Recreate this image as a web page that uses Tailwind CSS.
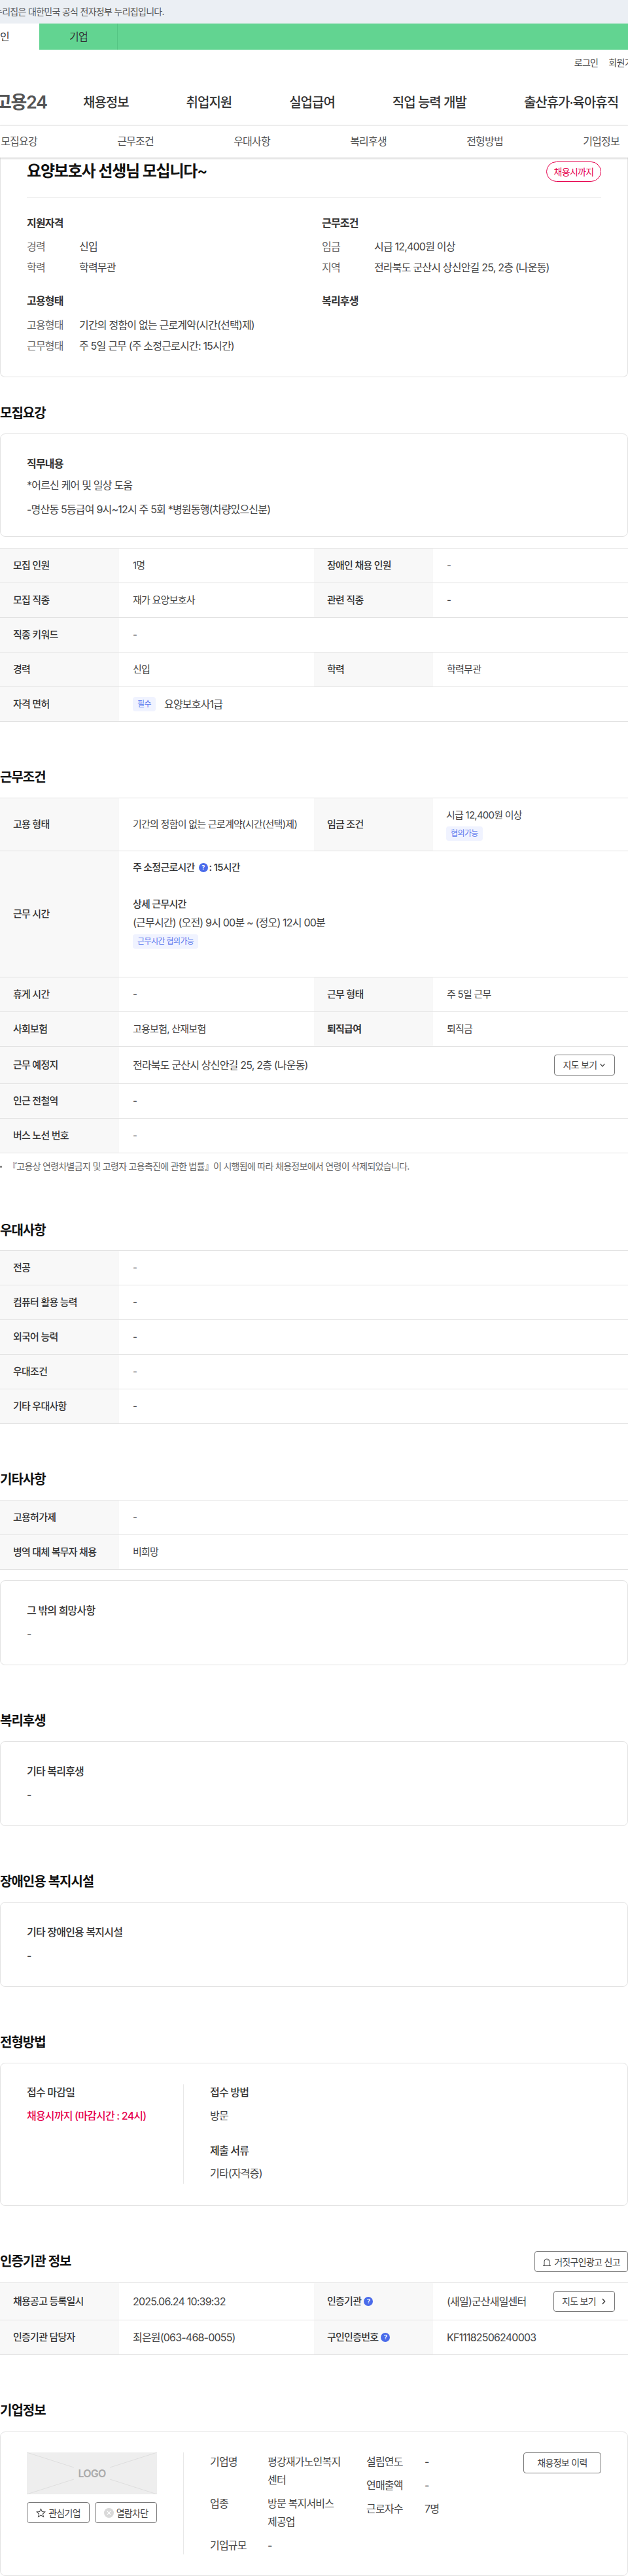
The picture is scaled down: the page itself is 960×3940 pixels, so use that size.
<!DOCTYPE html>
<html lang="ko">
<head>
    <meta charset="UTF-8" />
    <title>고용24 채용정보</title>
    <script src="https://cdn.jsdelivr.net/npm/@tailwindcss/browser@4"></script>
</head>
<body class="bg-white text-[#444] font-['Inter','Noto_Sans_CJK_KR',sans-serif] text-[15px]">
<div class="w-[960px] h-[3940px] overflow-hidden tracking-[-0.05em] [&_*]:tracking-[-0.05em]">

    <!-- gov banner -->
    <div class="h-9 bg-[#ebeff4] text-[14px] leading-9 text-[#555] whitespace-nowrap"><span class="-ml-[9px] inline-block">누리집은 대한민국 공식 전자정부 누리집입니다.</span></div>
    <div class="flex h-10 bg-[#62d491] text-[16px] leading-10 text-[#333]">
        <div class="w-[60px] bg-white overflow-hidden whitespace-nowrap"><span class="-ml-[14px] inline-block">개인</span></div>
        <div class="w-[120px] border-r border-[#55c484] pl-[46px]">기업</div>
    </div>

    <!-- header -->
    <header class="h-[116px] border-b border-[#e8e8e8]">
        <div class="flex justify-end gap-4 pt-[8px] -mr-[19px] text-[14px] leading-6 whitespace-nowrap text-[#444]">
            <span>로그인</span><span>회원가입</span>
        </div>
        <nav class="flex items-center mt-[33px] whitespace-nowrap text-[20px] leading-8 font-medium text-[#333]">
            <span class="-ml-[7px] w-[134px] text-[27px] font-semibold text-[#555]">고용24</span>
            <div class="flex gap-[88px]">
                <span>채용정보</span><span>취업지원</span><span>실업급여</span><span>직업 능력 개발</span><span>출산휴가·육아휴직</span>
            </div>
        </nav>
    </header>

    <!-- tabs -->
    <div class="relative z-10 h-[49px] bg-white shadow-[0_1px_3px_rgba(0,0,0,0.25)] overflow-hidden">
        <div class="grid grid-cols-6 w-[1068px] -ml-[60px] text-center text-[16px] leading-[49px] text-[#555]">
            <span>모집요강</span><span>근무조건</span><span>우대사항</span><span>복리후생</span><span>전형방법</span><span>기업정보</span>
        </div>
    </div>

    <main>
        <!-- summary card -->
        <section class="h-[336px] border-x border-b border-[#e2e2e2] rounded-b-lg px-10 text-[16px]">
            <div class="flex justify-between items-start h-[62px] border-b border-[#e8e8e8] pt-[5px]">
                <h1 class="text-[24px] leading-8 font-semibold text-[#111]">요양보호사 선생님 모십니다~</h1>
                <span class="mt-px h-[31px] w-[84px] rounded-full border border-[#e6004c] text-center text-[14px] leading-[29px] text-[#e6004c]">채용시까지</span>
            </div>
            <div class="grid grid-cols-[451px_1fr] pt-[26px]">
                <div class="h-[119px]">
                    <h3 class="leading-6 font-semibold text-[#333] mb-2">지원자격</h3>
                    <div class="flex leading-8"><span class="w-20 text-[#666]">경력</span><span>신입</span></div>
                    <div class="flex leading-8"><span class="w-20 text-[#666]">학력</span><span>학력무관</span></div>
                </div>
                <div class="h-[119px]">
                    <h3 class="leading-6 font-semibold text-[#333] mb-2">근무조건</h3>
                    <div class="flex leading-8"><span class="w-20 text-[#666]">임금</span><span>시급 12,400원 이상</span></div>
                    <div class="flex leading-8"><span class="w-20 text-[#666]">지역</span><span>전라북도 군산시 상신안길 25, 2층 (나운동)</span></div>
                </div>
                <div>
                    <h3 class="leading-6 font-semibold text-[#333] mb-[9px]">고용형태</h3>
                    <div class="flex leading-8"><span class="w-20 text-[#666]">고용형태</span><span>기간의 정함이 없는 근로계약(시간(선택)제)</span></div>
                    <div class="flex leading-8"><span class="w-20 text-[#666]">근무형태</span><span>주 5일 근무 (주 소정근로시간: 15시간)</span></div>
                </div>
                <div>
                    <h3 class="leading-6 font-semibold text-[#333]">복리후생</h3>
                </div>
            </div>
        </section>

        <!-- 모집요강 -->
        <h2 class="mt-10 mb-4 text-[20px] leading-[30px] font-semibold text-[#111]">모집요강</h2>
        <div class="h-[158px] border border-[#e2e2e2] rounded-lg px-10 pt-[33px] text-[16px]">
            <h3 class="leading-6 font-semibold text-[#333] mb-[5px]">직무내용</h3>
            <p class="leading-8 mb-[5px]">*어르신 케어 및 일상 도움</p>
            <p class="leading-8">-명산동 5등급여 9시~12시 주 5회 *병원동행(차량있으신분)</p>
        </div>

        <div class="mt-[17px] border-t border-[#e2e2e2]">
            <div class="grid grid-cols-[182px_298px_182px_1fr] h-[53px] border-b border-[#e2e2e2] items-stretch leading-[52px]">
                <div class="bg-[#f8f8f8] pl-5 font-medium text-[#333]">모집 인원</div><div class="pl-[21px]">1명</div>
                <div class="bg-[#f8f8f8] pl-5 font-medium text-[#333]">장애인 채용 인원</div><div class="pl-[21px]">-</div>
            </div>
            <div class="grid grid-cols-[182px_298px_182px_1fr] h-[53px] border-b border-[#e2e2e2] leading-[52px]">
                <div class="bg-[#f8f8f8] pl-5 font-medium text-[#333]">모집 직종</div><div class="pl-[21px]">재가 요양보호사</div>
                <div class="bg-[#f8f8f8] pl-5 font-medium text-[#333]">관련 직종</div><div class="pl-[21px]">-</div>
            </div>
            <div class="grid grid-cols-[182px_1fr] h-[53px] border-b border-[#e2e2e2] leading-[52px]">
                <div class="bg-[#f8f8f8] pl-5 font-medium text-[#333]">직종 키워드</div><div class="pl-[21px]">-</div>
            </div>
            <div class="grid grid-cols-[182px_298px_182px_1fr] h-[53px] border-b border-[#e2e2e2] leading-[52px]">
                <div class="bg-[#f8f8f8] pl-5 font-medium text-[#333]">경력</div><div class="pl-[21px]">신입</div>
                <div class="bg-[#f8f8f8] pl-5 font-medium text-[#333]">학력</div><div class="pl-[21px]">학력무관</div>
            </div>
            <div class="grid grid-cols-[182px_1fr] h-[53px] border-b border-[#e2e2e2] leading-[52px]">
                <div class="bg-[#f8f8f8] pl-5 font-medium text-[#333]">자격 면허</div>
                <div class="pl-[21px] flex items-center gap-[13px]">
                    <span class="w-[35px] h-[22px] rounded bg-[#f0f3ff] text-center text-[12px] leading-[22px] text-[#5b78ee]">필수</span>
                    <span class="text-[16px]">요양보호사1급</span>
                </div>
            </div>
        </div>

        <!-- 근무조건 -->
        <h2 class="mt-[70px] mb-4 text-[20px] leading-[30px] font-semibold text-[#111]">근무조건</h2>
        <div class="border-t border-[#e2e2e2]">
            <div class="grid grid-cols-[182px_298px_182px_1fr] h-[81px] border-b border-[#e2e2e2] items-stretch">
                <div class="bg-[#f8f8f8] pl-5 font-medium text-[#333] flex items-center">고용 형태</div>
                <div class="pl-[21px] flex items-center">기간의 정함이 없는 근로계약(시간(선택)제)</div>
                <div class="bg-[#f8f8f8] pl-5 font-medium text-[#333] flex items-center">임금 조건</div>
                <div class="pl-[20px] pt-[14px]">
                    <p class="leading-6">시급 12,400원 이상</p>
                    <span class="block w-fit mt-[5px] px-[7px] h-[22px] rounded bg-[#f0f3ff] text-[12px] leading-[22px] text-[#5b78ee]">협의가능</span>
                </div>
            </div>
            <div class="grid grid-cols-[182px_1fr] h-[193px] border-b border-[#e2e2e2]">
                <div class="bg-[#f8f8f8] pl-5 font-medium text-[#333] flex items-center">근무 시간</div>
                <div class="pl-[21px] pt-[13px]">
                    <p class="flex items-center leading-6 font-medium text-[#333]">주 소정근로시간<span class="ml-[6px] mr-[2px] w-[14px] h-[14px] rounded-full bg-[#4a6bea] text-center text-[9px] leading-[14px] font-bold text-white">?</span>: 15시간</p>
                    <p class="mt-8 leading-6 font-medium text-[#333]">상세 근무시간</p>
                    <p class="mt-[4px] leading-6 text-[16px]">(근무시간) (오전) 9시 00분 ~ (정오) 12시 00분</p>
                    <span class="block w-fit mt-[6px] px-[7px] h-[22px] rounded bg-[#f0f3ff] text-[12px] leading-[22px] text-[#5b78ee]">근무시간 협의가능</span>
                </div>
            </div>
            <div class="grid grid-cols-[182px_298px_182px_1fr] h-[53px] border-b border-[#e2e2e2] leading-[52px]">
                <div class="bg-[#f8f8f8] pl-5 font-medium text-[#333]">휴게 시간</div><div class="pl-[21px]">-</div>
                <div class="bg-[#f8f8f8] pl-5 font-medium text-[#333]">근무 형태</div><div class="pl-[21px]">주 5일 근무</div>
            </div>
            <div class="grid grid-cols-[182px_298px_182px_1fr] h-[53px] border-b border-[#e2e2e2] leading-[52px]">
                <div class="bg-[#f8f8f8] pl-5 font-medium text-[#333]">사회보험</div><div class="pl-[21px]">고용보험, 산재보험</div>
                <div class="bg-[#f8f8f8] pl-5 font-semibold text-[#333]">퇴직급여</div><div class="pl-[21px]">퇴직금</div>
            </div>
            <div class="grid grid-cols-[182px_1fr] h-[57px] border-b border-[#e2e2e2] leading-[56px]">
                <div class="bg-[#f8f8f8] pl-5 font-medium text-[#333]">근무 예정지</div>
                <div class="pl-[21px] pr-5 flex items-center justify-between">
                    <span class="text-[16px]">전라북도 군산시 상신안길 25, 2층 (나운동)</span>
                    <span class="flex items-center justify-center gap-1 w-[93px] h-8 rounded border border-[#777] text-[14px] text-[#444]">지도 보기
                        <svg class="w-[10px] h-[10px]" viewBox="0 0 10 10" fill="none" stroke="#444" stroke-width="1.2"><path d="M1.500 3.200 5 7l3.500-3.800"/></svg>
                    </span>
                </div>
            </div>
            <div class="grid grid-cols-[182px_1fr] h-[53px] border-b border-[#e2e2e2] leading-[52px]">
                <div class="bg-[#f8f8f8] pl-5 font-medium text-[#333]">인근 전철역</div><div class="pl-[21px]">-</div>
            </div>
            <div class="grid grid-cols-[182px_1fr] h-[53px] border-b border-[#e2e2e2] leading-[52px]">
                <div class="bg-[#f8f8f8] pl-5 font-medium text-[#333]">버스 노선 번호</div><div class="pl-[21px]">-</div>
            </div>
        </div>
        <p class="mt-[10px] flex items-center gap-[9px] text-[14px] leading-5 text-[#666]"><span class="w-[3px] h-[3px] rounded-full bg-[#666]"></span>『고용상 연령차별금지 및 고령자 고용촉진에 관한 법률』이 시행됨에 따라 채용정보에서 연령이 삭제되었습니다.</p>

        <!-- 우대사항 -->
        <h2 class="mt-[73px] mb-[15px] text-[20px] leading-[30px] font-semibold text-[#111]">우대사항</h2>
        <div class="border-t border-[#e2e2e2]">
            <div class="grid grid-cols-[182px_1fr] h-[53px] border-b border-[#e2e2e2] leading-[52px]"><div class="bg-[#f8f8f8] pl-5 font-medium text-[#333]">전공</div><div class="pl-[21px]">-</div></div>
            <div class="grid grid-cols-[182px_1fr] h-[53px] border-b border-[#e2e2e2] leading-[52px]"><div class="bg-[#f8f8f8] pl-5 font-medium text-[#333]">컴퓨터 활용 능력</div><div class="pl-[21px]">-</div></div>
            <div class="grid grid-cols-[182px_1fr] h-[53px] border-b border-[#e2e2e2] leading-[52px]"><div class="bg-[#f8f8f8] pl-5 font-medium text-[#333]">외국어 능력</div><div class="pl-[21px]">-</div></div>
            <div class="grid grid-cols-[182px_1fr] h-[53px] border-b border-[#e2e2e2] leading-[52px]"><div class="bg-[#f8f8f8] pl-5 font-medium text-[#333]">우대조건</div><div class="pl-[21px]">-</div></div>
            <div class="grid grid-cols-[182px_1fr] h-[53px] border-b border-[#e2e2e2] leading-[52px]"><div class="bg-[#f8f8f8] pl-5 font-medium text-[#333]">기타 우대사항</div><div class="pl-[21px]">-</div></div>
        </div>

        <!-- 기타사항 -->
        <h2 class="mt-[70px] mb-4 text-[20px] leading-[30px] font-semibold text-[#111]">기타사항</h2>
        <div class="border-t border-[#e2e2e2]">
            <div class="grid grid-cols-[182px_1fr] h-[53px] border-b border-[#e2e2e2] leading-[52px]"><div class="bg-[#f8f8f8] pl-5 font-medium text-[#333]">고용허가제</div><div class="pl-[21px]">-</div></div>
            <div class="grid grid-cols-[182px_1fr] h-[53px] border-b border-[#e2e2e2] leading-[52px]"><div class="bg-[#f8f8f8] pl-5 font-medium text-[#333]">병역 대체 복무자 채용</div><div class="pl-[21px]">비희망</div></div>
        </div>
        <div class="mt-4 h-[130px] border border-[#e2e2e2] rounded-lg px-10 pt-[33px] text-[16px]">
            <h3 class="leading-6 font-medium text-[#333] mb-3">그 밖의 희망사항</h3>
            <p class="leading-6">-</p>
        </div>

        <!-- 복리후생 -->
        <h2 class="mt-[70px] mb-4 text-[20px] leading-[30px] font-semibold text-[#111]">복리후생</h2>
        <div class="h-[130px] border border-[#e2e2e2] rounded-lg px-10 pt-[33px] text-[16px]">
            <h3 class="leading-6 font-medium text-[#333] mb-3">기타 복리후생</h3>
            <p class="leading-6">-</p>
        </div>

        <!-- 장애인용 복지시설 -->
        <h2 class="mt-[70px] mb-4 text-[20px] leading-[30px] font-semibold text-[#111]">장애인용 복지시설</h2>
        <div class="h-[130px] border border-[#e2e2e2] rounded-lg px-10 pt-[33px] text-[16px]">
            <h3 class="leading-6 font-medium text-[#333] mb-3">기타 장애인용 복지시설</h3>
            <p class="leading-6">-</p>
        </div>

        <!-- 전형방법 -->
        <h2 class="mt-[70px] mb-4 text-[20px] leading-[30px] font-semibold text-[#111]">전형방법</h2>
        <div class="h-[219px] border border-[#e2e2e2] rounded-lg px-10 pt-8 text-[16px]">
            <div class="flex h-[152px]">
                <div class="w-[240px] border-r border-[#e8e8e8]">
                    <h3 class="leading-6 font-medium text-[#333] mb-3">접수 마감일</h3>
                    <p class="leading-6 font-medium text-[#e6004c]">채용시까지 (마감시간 : 24시)</p>
                </div>
                <div class="pl-10">
                    <h3 class="leading-6 font-medium text-[#333] mb-3">접수 방법</h3>
                    <p class="leading-6">방문</p>
                    <h3 class="mt-[29px] leading-6 font-medium text-[#333] mb-[11px]">제출 서류</h3>
                    <p class="leading-6">기타(자격증)</p>
                </div>
            </div>
        </div>

        <!-- 인증기관 정보 -->
        <div class="mt-[69px] mb-4 flex items-center justify-between">
            <h2 class="text-[20px] leading-[30px] font-semibold text-[#111]">인증기관 정보</h2>
            <span class="flex items-center justify-center gap-[4px] w-[143px] h-8 rounded border border-[#777] text-[14px] text-[#444]">
                <svg class="w-[14px] h-[13px]" viewBox="0 0 14 13" fill="none" stroke="#444" stroke-width="1"><path d="M3 12V6a4 4 0 0 1 8 0v6M1 12.500h12"/><circle cx="9" cy="4.500" r="0.500" fill="#444" stroke="none"/></svg>
                거짓구인광고 신고
            </span>
        </div>
        <div class="border-t border-[#e2e2e2]">
            <div class="grid grid-cols-[182px_298px_182px_1fr] h-[57px] border-b border-[#e2e2e2] leading-[56px]">
                <div class="bg-[#f8f8f8] pl-5 font-medium text-[#333]">채용공고 등록일시</div>
                <div class="pl-[21px] text-[16px]">2025.06.24 10:39:32</div>
                <div class="bg-[#f8f8f8] pl-5 font-medium text-[#333] flex items-center gap-1">인증기관<span class="w-[14px] h-[14px] rounded-full bg-[#4a6bea] text-center text-[9px] leading-[14px] font-bold text-white">?</span></div>
                <div class="pl-[21px] pr-5 flex items-center justify-between">
                    <span class="text-[16px]">(새일)군산새일센터</span>
                    <span class="flex items-center justify-center gap-2 w-[94px] h-8 rounded border border-[#777] text-[14px] text-[#444]">지도 보기
                        <svg class="w-[8px] h-[10px]" viewBox="0 0 8 10" fill="none" stroke="#444" stroke-width="1.600"><path d="m2 1 3.500 4L2 9"/></svg>
                    </span>
                </div>
            </div>
            <div class="grid grid-cols-[182px_298px_182px_1fr] h-[53px] border-b border-[#e2e2e2] leading-[52px]">
                <div class="bg-[#f8f8f8] pl-5 font-medium text-[#333]">인증기관 담당자</div>
                <div class="pl-[21px] text-[16px]">최은원(063-468-0055)</div>
                <div class="bg-[#f8f8f8] pl-5 font-medium text-[#333] flex items-center gap-1">구인인증번호<span class="w-[14px] h-[14px] rounded-full bg-[#4a6bea] text-center text-[9px] leading-[14px] font-bold text-white">?</span></div>
                <div class="pl-[21px] text-[16px]">KF11182506240003</div>
            </div>
        </div>

        <!-- 기업정보 -->
        <h2 class="mt-[70px] mb-[17px] text-[20px] leading-[30px] font-semibold text-[#111]">기업정보</h2>
        <div class="h-[221px] border border-[#e2e2e2] rounded-lg px-10 pt-[31px] flex text-[16px]">
            <div class="w-[240px] h-[156px] border-r border-[#e8e8e8]">
                <div class="relative w-[199px] h-16 bg-[#eeeeee] flex items-center justify-center">
                    <svg class="absolute inset-0 w-full h-full" viewBox="0 0 199 64" fill="none" stroke="#dedede"><path d="M0 0 72 23M199 0l-72 23M0 64l72-23M199 64l-72-23"/></svg>
                    <span class="relative text-[16px] font-semibold text-[#aaa]">LOGO</span>
                </div>
                <div class="flex gap-2 mt-3 w-[199px]">
                    <span class="flex items-center justify-center gap-1 w-[96px] h-8 rounded border border-[#777] text-[14px] text-[#444]">
                        <svg class="w-[15px] h-[15px]" viewBox="0 0 16 16" fill="none" stroke="#444" stroke-width="1.100"><path d="m8 1.500 2 4.400 4.700.5-3.500 3.200 1 4.700L8 11.900l-4.200 2.400 1-4.700L1.300 6.400 6 5.900z"/></svg>
                        관심기업
                    </span>
                    <span class="flex items-center justify-center gap-1 w-[95px] h-8 rounded border border-[#777] text-[14px] text-[#444]">
                        <svg class="w-[15px] h-[15px]" viewBox="0 0 16 16" fill="none"><circle cx="8" cy="8" r="8" fill="#d9d9d9"/><path d="m5 5 6 6m0-6-6 6" stroke="#fff" stroke-width="1.200"/></svg>
                        열람차단
                    </span>
                </div>
            </div>
            <div class="pl-10 flex-1 flex">
                <div class="w-[239px] grid grid-cols-[88px_1fr] content-start gap-y-2 leading-7">
                    <span>기업명</span><span>평강재가노인복지<br>센터</span>
                    <span>업종</span><span>방문 복지서비스<br>제공업</span>
                    <span>기업규모</span><span>-</span>
                </div>
                <div class="w-[240px] grid grid-cols-[89px_1fr] content-start gap-y-2 leading-7">
                    <span>설립연도</span><span>-</span>
                    <span>연매출액</span><span>-</span>
                    <span>근로자수</span><span>7명</span>
                </div>
                <span class="w-[119px] h-8 rounded border border-[#777] text-center text-[14px] leading-[30px] text-[#444]">채용정보 이력</span>
            </div>
        </div>
    </main>
</div>
</body>
</html>
